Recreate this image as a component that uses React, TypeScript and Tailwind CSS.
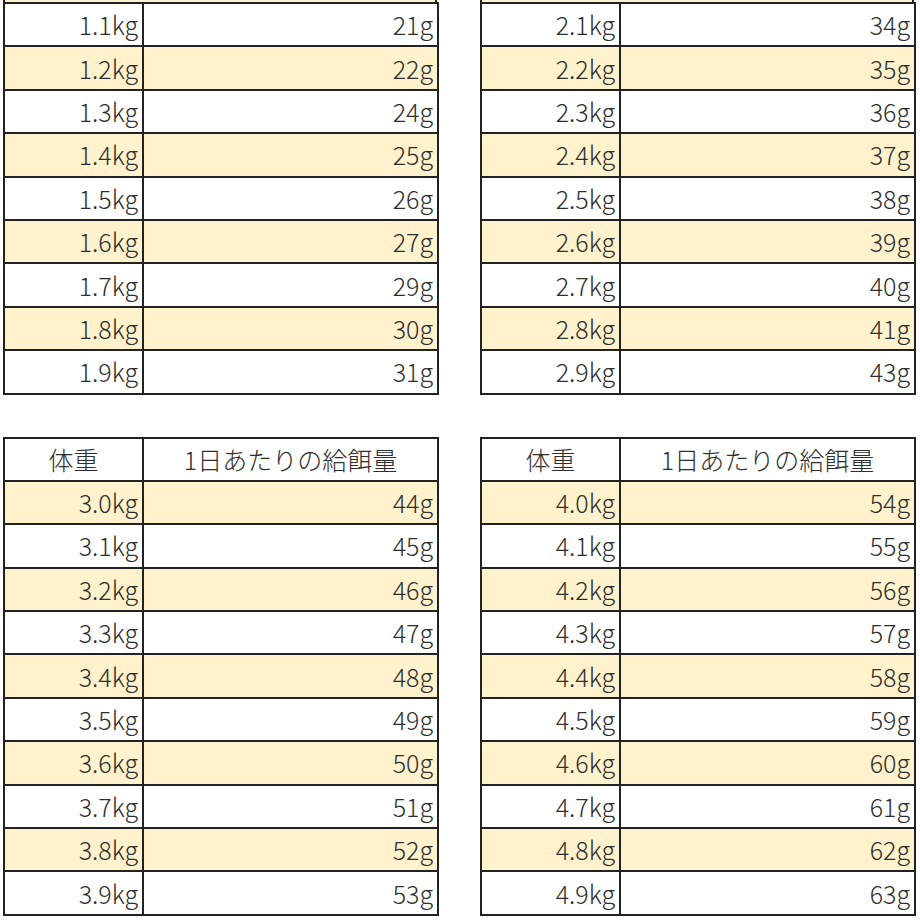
import React from "react"

type Row = { weight: string; amount: string }

const toRows = (t: string[][]): Row[] => t.map(([weight, amount]) => ({ weight, amount }))

// top two tables are scrolled: their header and first row sit above the view
const topTables: Row[][] = [
  toRows([
    ["1.1kg", "21g"], ["1.2kg", "22g"], ["1.3kg", "24g"], ["1.4kg", "25g"],
    ["1.5kg", "26g"], ["1.6kg", "27g"], ["1.7kg", "29g"], ["1.8kg", "30g"], ["1.9kg", "31g"],
  ]),
  toRows([
    ["2.1kg", "34g"], ["2.2kg", "35g"], ["2.3kg", "36g"], ["2.4kg", "37g"],
    ["2.5kg", "38g"], ["2.6kg", "39g"], ["2.7kg", "40g"], ["2.8kg", "41g"], ["2.9kg", "43g"],
  ]),
]

const bottomTables: Row[][] = [
  toRows([
    ["3.0kg", "44g"], ["3.1kg", "45g"], ["3.2kg", "46g"], ["3.3kg", "47g"], ["3.4kg", "48g"],
    ["3.5kg", "49g"], ["3.6kg", "50g"], ["3.7kg", "51g"], ["3.8kg", "52g"], ["3.9kg", "53g"],
  ]),
  toRows([
    ["4.0kg", "54g"], ["4.1kg", "55g"], ["4.2kg", "56g"], ["4.3kg", "57g"], ["4.4kg", "58g"],
    ["4.5kg", "59g"], ["4.6kg", "60g"], ["4.7kg", "61g"], ["4.8kg", "62g"], ["4.9kg", "63g"],
  ]),
]

const cell = "border-2 border-[#222] p-0"

function FeedTable({ rows, scrolled }: { rows: Row[]; scrolled?: boolean }) {
  // scrolled tables start with a white row (1.x1), the one above is yellow
  const offset = scrolled ? 1 : 0
  return (
    <div className="w-[434px]">
      {scrolled && <div className="h-[2px] border-x-2 border-[#222] bg-[#fff2cc]" />}
      <table className="w-[434px] table-fixed border-collapse">
        <colgroup>
          <col className="w-[139px]" />
          <col className="w-[295px]" />
        </colgroup>
        {!scrolled && (
          <thead>
            <tr className="h-[43.4px] bg-white">
              <th className={`${cell} text-center font-light`}>体重</th>
              <th className={`${cell} text-center font-light`}>1日あたりの給餌量</th>
            </tr>
          </thead>
        )}
        <tbody>
          {rows.map((r, i) => (
            <tr
              key={r.weight}
              className={(i + offset) % 2 === 0 ? "h-[43.4px] bg-[#fff2cc]" : "h-[43.4px] bg-white"}
            >
              <td className={`${cell} pr-[4px] text-right`}>{r.weight}</td>
              <td className={`${cell} pr-[4px] text-right`}>{r.amount}</td>
            </tr>
          ))}
        </tbody>
      </table>
    </div>
  )
}

export default function App() {
  return (
    <div
      className="h-[920px] w-[920px] overflow-hidden bg-white text-[25px] font-light leading-none text-[#2e2e2e]"
      style={{ fontFamily: '"Noto Sans CJK JP", "Noto Sans", sans-serif' }}
    >
      <div className="grid grid-cols-[434px_434px] gap-x-[43px] gap-y-[42px] pl-[3px]">
        {topTables.map((rows, i) => (
          <FeedTable key={`t${i}`} rows={rows} scrolled />
        ))}
        {bottomTables.map((rows, i) => (
          <FeedTable key={`b${i}`} rows={rows} />
        ))}
      </div>
    </div>
  )
}
